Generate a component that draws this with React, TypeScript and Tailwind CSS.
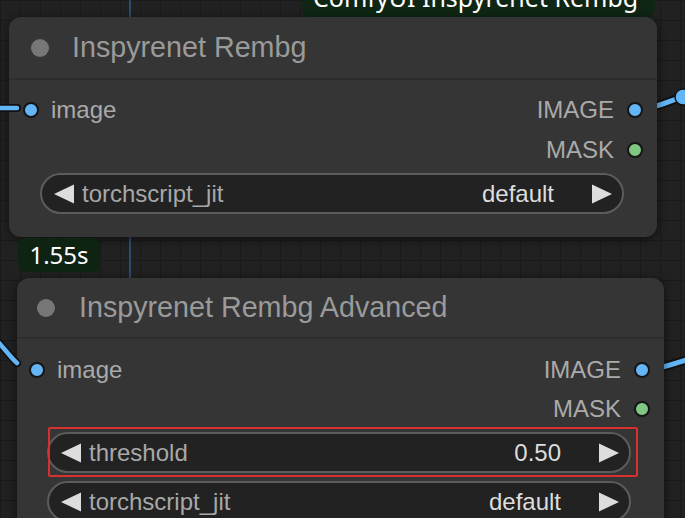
import React from "react";

const ARIAL = { fontFamily: '"Liberation Sans", Arial, sans-serif' };
const NOTO = { fontFamily: '"Noto Sans", "Open Sans", sans-serif' };

function Dot({ color }: { color: string }) {
  return (
    <span
      className="block w-[16px] h-[16px] rounded-full border-[2px] border-[#151515] shrink-0"
      style={{ backgroundColor: color }}
    />
  );
}

function SlotRow({
  left,
  right,
  rightColor,
  leftPad,
}: {
  left?: string;
  right: string;
  rightColor: string;
  leftPad: string;
}) {
  return (
    <div className={`flex items-center h-[40px] ${leftPad} pr-[14px]`}>
      {left ? (
        <div className="flex items-center gap-[12px]">
          <Dot color="#64b5f6" />
          <span className="text-[24px] text-[#aaaaaa]">{left}</span>
        </div>
      ) : null}
      <div className="ml-auto flex items-center gap-[13px]">
        <span className="text-[24px] text-[#aaaaaa]">{right}</span>
        <Dot color={rightColor} />
      </div>
    </div>
  );
}

function Widget({ label, value }: { label: string; value: string }) {
  return (
    <div className="flex items-center h-[41px] rounded-full bg-[#222222] border-[2px] border-[#5c5c5c] pl-[12px] pr-[10px]">
      <svg width="20" height="20" viewBox="0 0 20 20" className="shrink-0">
        <polygon points="0,10 20,0.5 20,19.5" fill="#dddddd" />
      </svg>
      <span className="ml-[8px] text-[24px] text-[#a8a8a8]">{label}</span>
      <span className="ml-auto text-[24px] text-[#dddddd]">{value}</span>
      <svg width="20" height="20" viewBox="0 0 20 20" className="shrink-0 ml-[38px]">
        <polygon points="20,10 0,0.5 0,19.5" fill="#dddddd" />
      </svg>
    </div>
  );
}

export default function App() {
  return (
    <div
      className="relative w-[685px] h-[518px] overflow-hidden bg-[#212121] bg-[linear-gradient(#1a1a1a_1px,transparent_1px),linear-gradient(90deg,#1a1a1a_1px,transparent_1px)] bg-[size:20px_20px]"
      style={ARIAL}
    >
      {/* background links (under nodes) */}
      <svg className="absolute inset-0" width="685" height="518">
        <line x1="130" y1="0" x2="130" y2="290" stroke="#2d4c70" strokeWidth="2" />
        <path d="M 640 109 C 660 108, 668 100, 690 95" stroke="#111" strokeWidth="9" fill="none" strokeLinecap="round" />
        <path d="M 640 109 C 660 108, 668 100, 690 95" stroke="#64b5f6" strokeWidth="5" fill="none" strokeLinecap="round" />
        <circle cx="683" cy="97" r="8" fill="#64b5f6" stroke="#111" strokeWidth="1.5" />
        <path d="M 646 370 C 665 368, 674 363, 690 359" stroke="#111" strokeWidth="9" fill="none" strokeLinecap="round" />
        <path d="M 646 370 C 665 368, 674 363, 690 359" stroke="#64b5f6" strokeWidth="5" fill="none" strokeLinecap="round" />
      </svg>

      {/* top group banner */}
      <div
        className="absolute left-[302px] top-[-22px] w-[353px] h-[39px] rounded-b-[8px] bg-[#0f2614] text-white text-[25px] leading-[39px] pl-[11px] whitespace-nowrap"
        style={NOTO}
      >
        ComfyUI Inspyrenet Rembg
      </div>

      {/* Node 1 */}
      <div className="absolute left-[9px] top-[17px] w-[648px] h-[220px] rounded-[12px] bg-[#353535] shadow-[0_2px_10px_rgba(0,0,0,0.55)]">
        <div className="flex items-center h-[63px] pl-[22px] border-b-[2px] border-[#2d2d2d]">
          <span className="block w-[18px] h-[18px] rounded-full bg-[#777777]" />
          <span className="ml-[23px] text-[28.7px] text-[#9a9a9a]">Inspyrenet Rembg</span>
        </div>
        <div className="pt-[10px]">
          <SlotRow left="image" right="IMAGE" rightColor="#64b5f6" leftPad="pl-[14px]" />
          <SlotRow right="MASK" rightColor="#81c784" leftPad="pl-[14px]" />
          <div className="ml-[31px] mr-[33px] mt-[3px]">
            <Widget label="torchscript_jit" value="default" />
          </div>
        </div>
      </div>

      {/* timing badge */}
      <div
        className="absolute left-[18px] top-[238px] w-[82px] h-[34px] rounded-[6px] bg-[#0f2313] text-white text-[24px] leading-[34px] text-center"
        style={NOTO}
      >
        1.55s
      </div>

      {/* Node 2 */}
      <div className="absolute left-[17px] top-[278px] w-[647px] h-[270px] rounded-[12px] bg-[#353535] shadow-[0_2px_10px_rgba(0,0,0,0.55)]">
        <div className="flex items-center h-[61px] pl-[20px] border-b-[2px] border-[#2d2d2d]">
          <span className="block w-[18px] h-[18px] rounded-full bg-[#777777]" />
          <span className="ml-[24px] text-[28.7px] text-[#9a9a9a]">Inspyrenet Rembg Advanced</span>
        </div>
        <div className="pt-[11px]">
          <SlotRow left="image" right="IMAGE" rightColor="#64b5f6" leftPad="pl-[12px]" />
          <div className="-mt-[1px]">
            <SlotRow right="MASK" rightColor="#81c784" leftPad="pl-[12px]" />
          </div>
          <div className="relative ml-[30px] mr-[33px] mt-[3px] flex flex-col gap-[8px]">
            <Widget label="threshold" value="0.50" />
            <Widget label="torchscript_jit" value="default" />
            <div className="absolute left-[1px] right-[-7px] top-[-5px] h-[50px] border-[2px] border-[#d8302c] rounded-[2px]" />
          </div>
        </div>
      </div>

      {/* input links (drawn over node edges) */}
      <svg className="absolute inset-0 pointer-events-none" width="685" height="518">
        <path d="M -5 108 L 17 108" stroke="#111" strokeWidth="8" fill="none" strokeLinecap="round" />
        <path d="M -5 108 L 17 108" stroke="#64b5f6" strokeWidth="4.5" fill="none" strokeLinecap="round" />
        <path d="M -5 339 C 3 346, 9 356, 17 363" stroke="#111" strokeWidth="8" fill="none" strokeLinecap="round" />
        <path d="M -5 339 C 3 346, 9 356, 17 363" stroke="#64b5f6" strokeWidth="4.5" fill="none" strokeLinecap="round" />
      </svg>
    </div>
  );
}
